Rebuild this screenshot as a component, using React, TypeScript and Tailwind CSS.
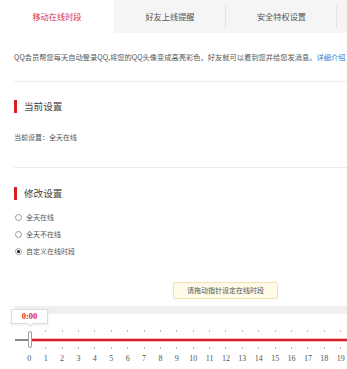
import React from "react";

const hours = Array.from({ length: 20 }, (_, i) => i);

function Tab({ label, active = false, divider = false, width }: { label: string; active?: boolean; divider?: boolean; width: string }) {
  return (
    <div className={`relative flex h-full shrink-0 items-center justify-center ${width} ${active ? "bg-white text-[#d9343c]" : "text-[#555]"}`}>
      <span className="text-[8.2px] leading-none">{label}</span>
      {divider && <span className="absolute right-0 top-[6px] h-[22px] w-px bg-[#e2e2e2]" />}
    </div>
  );
}

function Heading({ title }: { title: string }) {
  return (
    <div className="flex h-[13px] items-center">
      <span className="h-[13px] w-[3px] bg-[#d81e1e]" />
      <span className="ml-[7px] text-[9.6px] leading-none text-[#444]">{title}</span>
    </div>
  );
}

function Radio({ label, checked = false }: { label: string; checked?: boolean }) {
  return (
    <label className="flex h-[10px] items-center">
      <span className="flex h-[7px] w-[7px] items-center justify-center rounded-full border border-[#9a9a9a] bg-white">
        {checked && <span className="h-[3px] w-[3px] rounded-full bg-[#111]" />}
      </span>
      <span className="ml-[4px] text-[7px] leading-none text-[#555]">{label}</span>
    </label>
  );
}

function TickRow() {
  return (
    <div className="flex h-[2px] pl-[21.1px]">
      {hours.map((h) => (
        <div key={h} className="flex w-[16.4px] shrink-0 justify-center">
          {h > 0 && <span className="h-[2px] w-px bg-[#bbb]" />}
        </div>
      ))}
    </div>
  );
}

export default function App() {
  return (
    <div
      className="relative h-[369px] w-[347px] overflow-hidden bg-white"
      style={{ fontFamily: '"Noto Sans CJK SC", "Liberation Sans", sans-serif' }}
    >
      {/* Tabs */}
      <div className="flex h-[33px] bg-[#f5f5f5]">
        <Tab label="移动在线时段" active width="w-[114px]" />
        <Tab label="好友上线提醒" divider width="w-[112px]" />
        <Tab label="安全特权设置" divider width="w-[111px]" />
        <Tab label="" width="w-[100px]" />
      </div>

      {/* Intro */}
      <div className="h-[48px] pl-[14px] pt-[19px]">
        <p className="whitespace-nowrap text-[7.25px] leading-[10px] text-[#555]">
          QQ会员帮您每天自动登录QQ,将您的QQ头像变成高亮彩色，好友就可以看到您并给您发消息。
          <span className="text-[#2d7fd0]">详细介绍</span>
        </p>
      </div>

      {/* Current setting */}
      <div className="ml-[14px] h-[86px] border-t border-[#ececec] pt-[18px]">
        <Heading title="当前设置" />
        <p className="mt-[19px] text-[7px] leading-[10px] text-[#555]">当前设置：全天在线</p>
      </div>

      {/* Modify */}
      <div className="ml-[14px] border-t border-[#ececec] pt-[19px]">
        <Heading title="修改设置" />
        <div className="ml-px mt-[12px] flex flex-col gap-[7px]">
          <Radio label="全天在线" />
          <Radio label="全天不在线" />
          <Radio label="自定义在线时段" checked />
        </div>
      </div>

      {/* Tooltip */}
      <div className="ml-[173px] mt-[26px] flex h-[17px] w-[105px] items-center justify-center rounded-[2px] border border-[#f3dfb4] bg-[#fffbe8]">
        <span className="text-[7px] leading-none text-[#555]">请拖动指针设定在线时段</span>
      </div>

      {/* Slider */}
      <div className="relative mt-[7px]">
        <div className="ml-[14px] h-[8px] bg-[#efefef]" />
        <div className="mt-[16px]">
          <TickRow />
        </div>
        <div className="mt-[5px] flex h-[6px] items-center">
          <span className="ml-[15px] h-[2px] w-[14px] bg-[#8a8a8a]" />
          <span className="ml-[3px] h-[4px] flex-1 border-y border-[#f3b9ba] bg-[#d4222a]" />
        </div>
        <div className="mt-[4px]">
          <TickRow />
        </div>
        <div className="mt-[5px] flex pl-[21.1px]">
          {hours.map((h) => (
            <span key={h} className="w-[16.4px] shrink-0 text-center text-[8px] leading-[10px] text-[#555]" style={{ fontFamily: '"Liberation Serif", serif' }}>
              {h}
            </span>
          ))}
        </div>

        {/* bubble */}
        <div className="absolute left-[11px] top-[3px] flex h-[15px] w-[37px] items-center justify-center border border-[#dcdcdc] bg-white shadow-[0_1px_2px_rgba(0,0,0,0.08)]">
          <span className="text-[8.5px] font-bold leading-none text-[#e0262b]" style={{ fontFamily: '"Liberation Serif", serif' }}>
            0:00
          </span>
          <span className="absolute -bottom-[3px] left-[16px] h-[5px] w-[5px] rotate-45 border-b border-r border-[#dcdcdc] bg-white" />
        </div>

        {/* handle */}
        <div className="absolute left-[28px] top-[25px] h-[17px] w-[4px] rounded-[2px] border border-[#9b9b9b] bg-white" />
      </div>
    </div>
  );
}
